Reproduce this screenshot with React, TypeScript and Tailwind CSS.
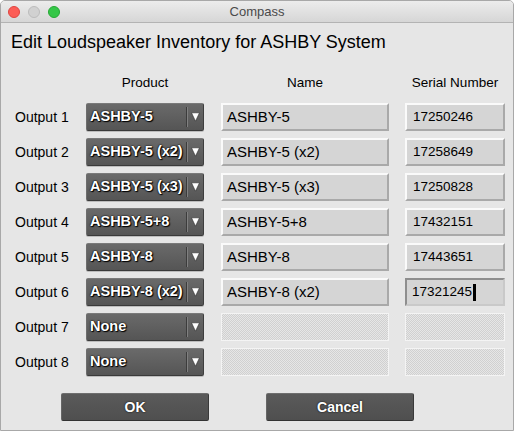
const FONT = "font-['Liberation_Sans',Arial,sans-serif]"

type Row = {
  output: string
  product: string
  name?: string
  serial?: string
  focused?: boolean
}

const ROWS: Row[] = [
  { output: 'Output 1', product: 'ASHBY-5', name: 'ASHBY-5', serial: '17250246' },
  { output: 'Output 2', product: 'ASHBY-5 (x2)', name: 'ASHBY-5 (x2)', serial: '17258649' },
  { output: 'Output 3', product: 'ASHBY-5 (x3)', name: 'ASHBY-5 (x3)', serial: '17250828' },
  { output: 'Output 4', product: 'ASHBY-5+8', name: 'ASHBY-5+8', serial: '17432151' },
  { output: 'Output 5', product: 'ASHBY-8', name: 'ASHBY-8', serial: '17443651' },
  { output: 'Output 6', product: 'ASHBY-8 (x2)', name: 'ASHBY-8 (x2)', serial: '17321245', focused: true },
  { output: 'Output 7', product: 'None' },
  { output: 'Output 8', product: 'None' },
]

const DISABLED_FIELD =
  'h-[28px] border border-[#f4f4f4] bg-[repeating-conic-gradient(#d0d0d0_0_25%,#e6e6e6_0_50%)] bg-[length:2px_2px]'

const FIELD =
  'h-[28px] flex items-center pl-[4px] bg-[#d5d5d5] border-2 border-t-[#fafafa] border-l-[#fafafa] border-b-[#a9a9a9] border-r-[#a9a9a9] text-black'

// 下拉框
function Dropdown({ value }: { value: string }) {
  return (
    <div className="w-[118px] h-[28px] flex items-stretch rounded-[2px] bg-[linear-gradient(#6a6a6a,#555555)] border border-t-[#7a7a7a] border-l-[#6d6d6d] border-b-[#3a3a3a] border-r-[#3e3e3e] shadow-[0_1px_0_#bdbdbd]">
      <span className="flex-1 flex items-center pl-[3px] text-white font-bold text-[14.5px] whitespace-nowrap overflow-hidden [text-shadow:0_0_2px_#000,0_0_1px_#000,1px_1px_1px_#000]">
        {value}
      </span>
      <span className="w-px bg-[#3c3c3c] my-[3px]" />
      <span className="w-px bg-[#808080] my-[3px]" />
      <span className="w-[15px] flex items-center justify-center">
        <svg width="9" height="10" viewBox="0 0 9 10">
          <path d="M0.5 0.8 H8.5 L4.5 9.2 Z" fill="#fff" stroke="#2a2a2a" strokeWidth="0.6" />
        </svg>
      </span>
    </div>
  )
}

export default function App() {
  return (
    <div className={`w-[515px] h-[432px] bg-white ${FONT}`}>
      <div className="w-[514px] h-[431px] flex flex-col border border-[#a8a8a8] bg-[#e6e6e6] rounded-t-[5px] overflow-hidden">
        {/* title bar */}
        <div className="relative h-[22px] shrink-0 flex items-center justify-center bg-[linear-gradient(#ececec,#d6d6d6)] border-b border-[#b3b3b3]">
          <div className="absolute left-[7px] top-[5px] flex gap-[8px]">
            <span className="w-[12px] h-[12px] rounded-full bg-[#fc5d56] border border-[#de4540]" />
            <span className="w-[12px] h-[12px] rounded-full bg-[#d1d1d1] border border-[#bcbcbc]" />
            <span className="w-[12px] h-[12px] rounded-full bg-[#35c748] border border-[#25a834]" />
          </div>
          <span className="text-[13px] text-[#4a4a4a]">Compass</span>
        </div>

        <div className="pl-[10px] pt-[9px]">
          <h1 className="text-[18px] leading-[21px] text-black">Edit Loudspeaker Inventory for ASHBY System</h1>

          <div className="mt-[22px] flex text-[13.5px] leading-[16px] text-black">
            <div className="w-[75px]" />
            <div className="w-[118px] text-center">Product</div>
            <div className="w-[17px]" />
            <div className="w-[168px] text-center">Name</div>
            <div className="w-[16px]" />
            <div className="w-[100px] text-center">Serial Number</div>
          </div>

          <div className="mt-[12px] flex flex-col gap-[7px]">
            {ROWS.map((row) => (
              <div key={row.output} className="flex items-center">
                <div className="w-[75px] pl-[4px] text-[14px] text-black">{row.output}</div>
                <Dropdown value={row.product} />
                <div className="w-[17px]" />
                {row.name ? (
                  <div className={`w-[168px] text-[15px] ${FIELD}`}>{row.name}</div>
                ) : (
                  <div className={`w-[168px] ${DISABLED_FIELD}`} />
                )}
                <div className="w-[16px]" />
                {row.serial ? (
                  row.focused ? (
                    <div className="w-[100px] h-[28px] flex items-center pl-[5px] bg-[#d5d5d5] border-2 border-t-[#8e8e8e] border-l-[#8e8e8e] border-b-[#c9c9c9] border-r-[#c9c9c9] text-[13.5px] text-black">
                      {row.serial}
                      <span className="w-[3px] h-[17px] bg-black ml-px" />
                    </div>
                  ) : (
                    <div className={`w-[100px] pl-[6px] text-[13.5px] ${FIELD}`}>{row.serial}</div>
                  )
                ) : (
                  <div className={`w-[100px] ${DISABLED_FIELD}`} />
                )}
              </div>
            ))}
          </div>

          <div className="mt-[17px] flex pl-[50px] gap-[57px]">
            {['OK', 'Cancel'].map((label) => (
              <button
                key={label}
                className="w-[148px] h-[28px] rounded-[2px] bg-[linear-gradient(#5a5a5a,#4f4f4f)] border border-t-[#6e6e6e] border-l-[#666] border-b-[#333] border-r-[#3a3a3a] text-white font-bold text-[14px] [text-shadow:0_0_2px_#000]"
              >
                {label}
              </button>
            ))}
          </div>
        </div>
      </div>
    </div>
  )
}
